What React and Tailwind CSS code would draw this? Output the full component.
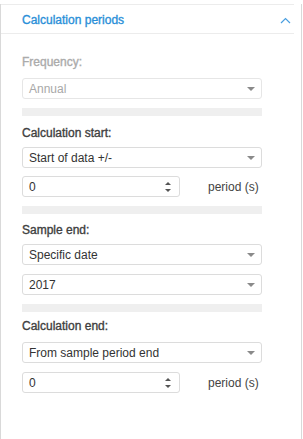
const Caret = () => (
    <span className="w-0 h-0 border-x-[4px] border-x-transparent border-t-[4px] border-t-[#8a8a8a]" />
)

const Select = ({ value, disabled }) => (
    <div className={`h-[21px] w-[240px] flex items-center justify-between pl-[6px] pr-[6px] rounded-[3px] border bg-white ${disabled ? 'border-[#e6e6e6] text-[#a8a8a8]' : 'border-[#dcdcdc] text-[#333]'}`}>
        <span>{value}</span>
        <Caret />
    </div>
)

const NumberField = ({ value }) => (
    <div className="flex items-center">
        <div className="h-[21px] w-[158px] flex items-center justify-between pl-[6px] pr-[8px] rounded-[3px] border border-[#dcdcdc] bg-white text-[#333]">
            <span>{value}</span>
            <span className="flex flex-col items-center gap-[4px]">
                <span className="w-0 h-0 border-x-[3px] border-x-transparent border-b-[3px] border-b-[#555]" />
                <span className="w-0 h-0 border-x-[3px] border-x-transparent border-t-[3px] border-t-[#555]" />
            </span>
        </div>
        <span className="ml-[28px] text-[#444]">period (s)</span>
    </div>
)

const Bar = ({ className }) => <div className={`h-[8px] w-[240px] bg-[#efefef] ${className}`} />

const Label = ({ children, className, muted }) => (
    <div className={`h-[14px] [-webkit-text-stroke:0.35px_currentColor] ${muted ? 'text-[#ababab]' : 'text-[#404040]'} ${className}`}>{children}</div>
)

export default function App() {
    return (
        <div className="w-[302px] h-[439px] border-x border-b border-[#d9d9d9] bg-white text-[12px] leading-[14px]"
            style={{ fontFamily: '"Liberation Sans", Arial, sans-serif' }}>
            <div className="mt-[4px] mr-[7px] h-[30px] border-y border-[#ececec] flex items-center justify-between pl-[21px] pr-[3px]">
                <span className="mt-[1px] text-[#2a8fd8] [-webkit-text-stroke:0.35px_currentColor]">Calculation periods</span>
                <svg width="11" height="7" viewBox="0 0 11 7" className="mt-[3px]">
                    <path d="M1 6 L5.5 1.5 L10 6" fill="none" stroke="#4a9fe0" strokeWidth="1.2" />
                </svg>
            </div>
            <div className="pl-[21px] pt-[21px] flex flex-col">
                <Label muted>Frequency:</Label>
                <div className="mt-[9px]"><Select value="Annual" disabled /></div>
                <Bar className="mt-[9px]" />

                <Label className="mt-[10px]">Calculation start:</Label>
                <div className="mt-[7px]"><Select value="Start of data +/-" /></div>
                <div className="mt-[8px]"><NumberField value="0" /></div>
                <Bar className="mt-[9px]" />

                <Label className="mt-[9px]">Sample end:</Label>
                <div className="mt-[7px]"><Select value="Specific date" /></div>
                <div className="mt-[9px]"><Select value="2017" /></div>
                <Bar className="mt-[9px]" />

                <Label className="mt-[7px]">Calculation end:</Label>
                <div className="mt-[9px]"><Select value="From sample period end" /></div>
                <div className="mt-[9px]"><NumberField value="0" /></div>
            </div>
        </div>
    )
}
